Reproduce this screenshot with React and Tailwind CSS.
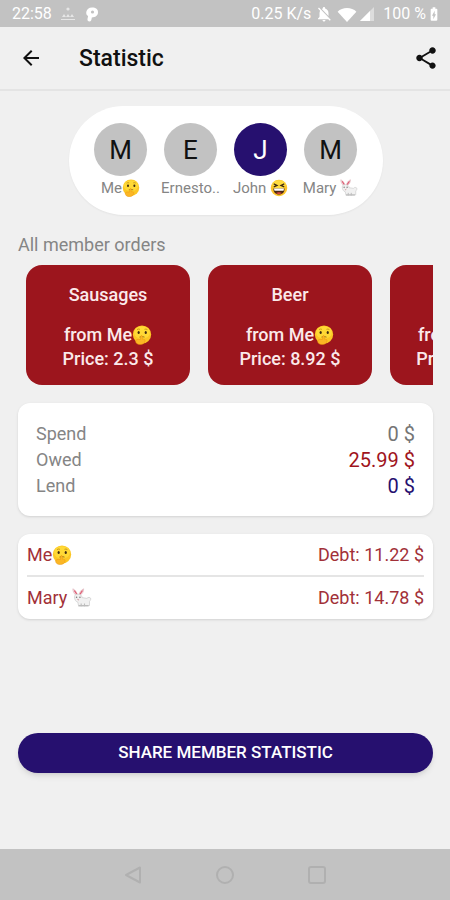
import React from "react";
import {
  MdArrowBack,
  MdBatteryChargingFull,
  MdNotificationsOff,
  MdShare,
} from "react-icons/md";

const members = [
  { initial: "M", name: "Me", emoji: "hush" },
  { initial: "E", name: "Ernesto.." },
  { initial: "J", name: "John ", emoji: "grin", active: true },
  { initial: "M", name: "Mary ", emoji: "rabbit" },
];

const orders = [
  { title: "Sausages", from: "Me", emoji: "hush", price: "2.3 $" },
  { title: "Beer", from: "Me", emoji: "hush", price: "8.92 $" },
  { title: "Chips", from: "Mary ", emoji: "rabbit", price: "14.78 $" },
];

const totals = [
  { label: "Spend", value: "0 $", color: "text-[#757575]" },
  { label: "Owed", value: "25.99 $", color: "text-[#a0141c]" },
  { label: "Lend", value: "0 $", color: "text-[#26106f]" },
];

const debts = [
  { name: "Me", emoji: "hush", debt: "11.22 $" },
  { name: "Mary ", emoji: "rabbit", debt: "14.78 $" },
];

const HushFace = () => (
  <>
    <circle cx="12" cy="11.5" r="11" fill="#fcc624" />
    <ellipse cx="12" cy="9" rx="9.5" ry="7.5" fill="#ffd935" />
    <ellipse cx="8" cy="9" rx="1.3" ry="1.8" fill="#3d2a10" />
    <ellipse cx="16.5" cy="9" rx="1.3" ry="1.8" fill="#3d2a10" />
    <path d="M6 5.500q1.800-1.200 3.500-.3M15 5.200q1.700-.9 3.500.3" stroke="#b98410" strokeWidth=".9" fill="none" />
    <path d="M9 14.500q3-1.200 6 0" stroke="#8a5f14" strokeWidth="1" fill="none" />
    <path
      d="M10.500 13.500c.2-1.200 1.800-1.200 1.900 0l.1 3.500c2.500-.3 3.500.8 3 2.600-.6 2.400-2.600 3.900-5.500 3.900-3.800 0-5.600-1.800-5.600-4.300 0-1.700 2.200-2.200 5.600-1.700z"
      fill="#fbb625"
      stroke="#e8950f"
      strokeWidth=".6"
    />
  </>
);

const GrinFace = () => (
  <>
    <circle cx="12" cy="12" r="11" fill="#fdc42b" />
    <ellipse cx="12" cy="7.500" rx="9" ry="6" fill="#ffdb3f" />
    <path d="M5 6.500l4.500 2L5 10.500M19 6.500l-4.500 2 4.500 2" stroke="#3d2810" strokeWidth="1.500" fill="none" />
    <path d="M4.500 12.500h15c0 5-3 8-7.500 8s-7.500-3-7.500-8z" fill="#4a2812" />
    <path d="M5.200 12.800h13.600l-.8 3H6z" fill="#fff" />
    <path d="M8 18.700q4-2.200 8 0-4 2.300-8 0z" fill="#e8483f" />
  </>
);

const Rabbit = () => (
  <>
    <path d="M1 1c3 1 4.500 4 5.500 7L5 9C2.500 7 1 4 1 1zM14 1c0 3-1.500 6-4 7.500L8.500 8c.5-3 2.500-6 5.500-7z" fill="#f5e4e7" stroke="#dba8b1" strokeWidth=".7" />
    <path d="M2.800 3l3 4.500M12.600 3L9.500 7.500" stroke="#de5870" strokeWidth="1.500" />
    <path
      d="M3 10.500C3 8 5 7.500 7.500 7.500S12 9 12 11.500l6 1c1-2 4.500-1.500 4.500.5s-1 2-1.500 3v5l-2 1H8l-1-5c-2.500-.5-4-3-4-6.500z"
      fill="#f1f1f1"
      stroke="#c8c8c8"
      strokeWidth=".8"
    />
    <circle cx="5.500" cy="11" r=".9" fill="#777" />
    <circle cx="9.500" cy="11" r=".9" fill="#777" />
    <path d="M6.500 13.500l1 .8 1-.8" stroke="#c9757f" strokeWidth="1" fill="none" />
    <path d="M8 21h12M11 18.500v3.500M15 18.500v3.500" stroke="#bcbcbc" strokeWidth="1.300" />
  </>
);

const faces = { hush: HushFace, grin: GrinFace, rabbit: Rabbit };

const Emoji = ({ name, className }) => {
  const Face = faces[name];
  return (
    <svg viewBox="0 0 24 24" className={`inline-block shrink-0 ${className}`} aria-hidden="true">
      <Face />
    </svg>
  );
};

const StatusBar = () => (
  <div className="flex h-[27px] items-center justify-between bg-[#c2c2c2] pt-px pr-2 pl-3 text-base text-white">
    <div className="flex items-center gap-2">
      <span>22:58</span>
      <svg viewBox="0 0 16 16" className="size-4 opacity-60" fill="#fff">
        <circle cx="8" cy="3" r="1.600" />
        <path d="M2 11l2-3 2 3 2-3 2 3 2-3 2 3zM1 13h14v1H1z" />
      </svg>
      <svg viewBox="0 0 16 16" className="size-4">
        <path d="M5.500 15.500c-1.500 0-2.300-1-2-2.500l.6-3C1 9 1.500 1.500 8 1.500c4 0 6 2 6 4.800 0 3.200-2.500 5.200-6.200 5.200-.3 2.500-.8 4-2.300 4z" fill="#fff" />
        <circle cx="8.500" cy="6" r="1.600" fill="#c2c2c2" />
      </svg>
    </div>
    <div className="flex items-center">
      <span>0.25 K/s</span>
      <MdNotificationsOff className="ml-1 size-[18px]" />
      <svg viewBox="0 0 20 16" className="ml-1 h-[15px] w-5" fill="#fff">
        <path d="M0 5C5-.3 15-.3 20 5l-10 11z" />
      </svg>
      <svg viewBox="0 0 16 16" className="ml-0.5 size-4">
        <path d="M1 15L15 1v14z" fill="#fff" opacity=".45" />
        <path d="M1 15L11 5v10z" fill="#fff" />
      </svg>
      <span className="ml-2">100 %</span>
      <MdBatteryChargingFull className="size-4" />
    </div>
  </div>
);

const Header = () => (
  <header className="flex h-16 items-center border-b-2 border-[#e4e4e4] px-[19px] text-[#111111]">
    <button type="button" aria-label="Back">
      <MdArrowBack className="size-6" />
    </button>
    <h1 className="ml-9 pt-0.5 text-[23px] font-medium">Statistic</h1>
    <button type="button" aria-label="Share" className="-mr-2 ml-auto">
      <MdShare className="size-[26px]" />
    </button>
  </header>
);

const MemberPicker = () => (
  <div className="mx-auto flex h-[109px] rounded-full bg-white px-[17px] pt-[17px] shadow-xs">
    {members.map((member, index) => (
      <button key={index} type="button" className="flex w-[70px] flex-col items-center">
        <span
          className={`flex size-[53px] items-center justify-center rounded-full pt-0.5 text-[26px] ${
            member.active ? "bg-[#26106f] text-white" : "bg-[#c2c2c2] text-[#111111]"
          }`}
        >
          {member.initial}
        </span>
        <span className="flex h-6 items-center text-[15px] whitespace-pre text-[#858585]">
          {member.name}
          {member.emoji && <Emoji name={member.emoji} className="size-[18px]" />}
        </span>
      </button>
    ))}
  </div>
);

const OrderCard = ({ order }) => (
  <article className="flex h-[120px] w-[164px] shrink-0 flex-col items-center rounded-2xl bg-[#9c151d] pt-[18px] text-lg leading-6 font-medium text-[#fbe9ea]">
    <h3>{order.title}</h3>
    <p className="mt-4 flex items-center whitespace-pre">
      from {order.from}
      <Emoji name={order.emoji} className="size-5" />
    </p>
    <p>Price: {order.price}</p>
  </article>
);

const App = () => {
  return (
    <div className="flex min-h-screen flex-col bg-[#f0f0f0] font-[Roboto,sans-serif]">
      <StatusBar />
      <Header />

      <main className="flex flex-1 flex-col pt-[15px] pr-[17px] pb-[76px] pl-[18px]">
        <MemberPicker />

        <h2 className="mt-[18px] text-lg leading-6 text-[#858585]">All member orders</h2>
        <div className="mt-2 flex gap-[18px] overflow-x-auto pl-2 [scrollbar-width:none]">
          {orders.map((order) => (
            <OrderCard key={order.title} order={order} />
          ))}
        </div>

        <dl className="mt-[18px] rounded-xl bg-white px-[18px] pt-[18px] pb-[17px] shadow-sm">
          {totals.map((row) => (
            <div key={row.label} className="flex h-[26px] items-center justify-between">
              <dt className="text-lg text-[#858585]">{row.label}</dt>
              <dd className={`text-xl ${row.color}`}>{row.value}</dd>
            </div>
          ))}
        </dl>

        <ul className="mt-[18px] divide-y-2 divide-[#e5e5e5] rounded-xl bg-white px-[9px] pt-px text-lg text-[#a23038] shadow-sm">
          {debts.map((item) => (
            <li key={item.name} className="flex h-[42px] items-center justify-between">
              <span className="flex items-center whitespace-pre">
                {item.name}
                <Emoji name={item.emoji} className="size-5" />
              </span>
              <span>Debt: {item.debt}</span>
            </li>
          ))}
        </ul>

        <button
          type="button"
          className="mt-auto h-10 rounded-full bg-[#26106f] text-[17px] font-medium text-white uppercase shadow-md"
        >
          Share member statistic
        </button>
      </main>

      <nav className="flex h-[51px] items-center justify-center gap-[74px] bg-[#c2c2c2] text-[#b0b0b0]">
        <button type="button" aria-label="Back">
          <svg viewBox="0 0 18 18" className="size-[18px]" fill="none" stroke="currentColor" strokeWidth="2">
            <path d="M16 1.500v15L2 9z" strokeLinejoin="round" />
          </svg>
        </button>
        <button type="button" aria-label="Home">
          <svg viewBox="0 0 18 18" className="size-[18px]" fill="none" stroke="currentColor" strokeWidth="2">
            <circle cx="9" cy="9" r="8" />
          </svg>
        </button>
        <button type="button" aria-label="Recent apps">
          <svg viewBox="0 0 18 18" className="size-[18px]" fill="none" stroke="currentColor" strokeWidth="2">
            <rect x="1" y="1" width="16" height="16" rx="2" />
          </svg>
        </button>
      </nav>
    </div>
  );
};

export default App;
